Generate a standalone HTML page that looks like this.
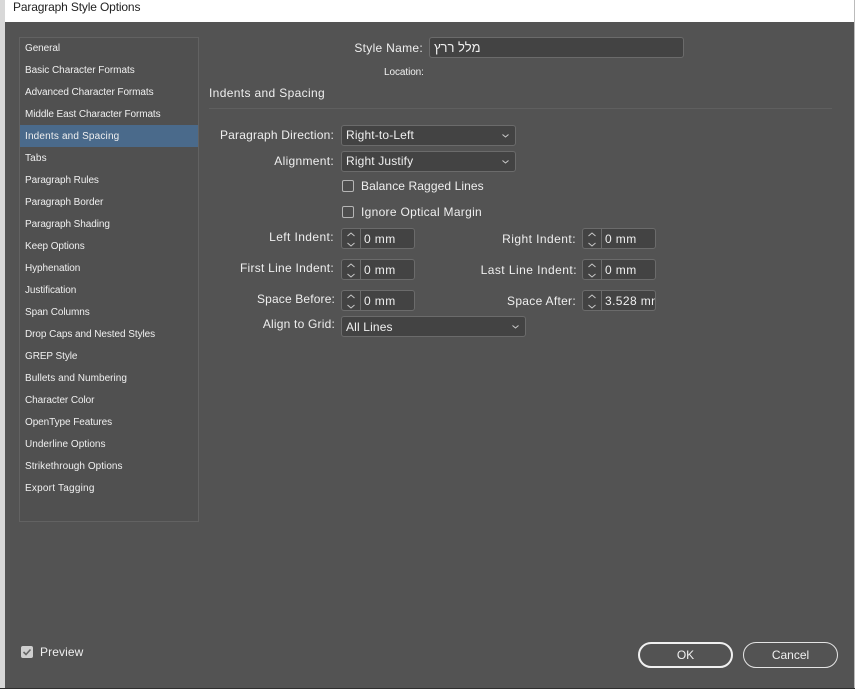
<!DOCTYPE html>
<html><head><meta charset="utf-8">
<style>
html,body{margin:0;padding:0;width:855px;height:689px;overflow:hidden;background:#2a2a2a}
body{position:relative;font-family:"Liberation Sans","Noto Sans CJK JP",sans-serif;color:#f0f0f0}
div,span{position:absolute;box-sizing:border-box;white-space:nowrap}
#left{left:0;top:0;width:5px;height:689px;background:#d8d8d8}
#title{left:5px;top:0;width:850px;height:22px;background:#fff}
#title span{left:8px;top:0;font-size:12px;line-height:14px;color:#222;letter-spacing:-.15px}
#dlg{left:5px;top:22px;width:849px;height:666px;background:#535353}
#right{left:854px;top:0;width:1px;height:689px;background:#bbb}
#list{left:19px;top:37px;width:180px;height:485px;border:1px solid #626262;background:#505050}
.it{left:25px;font-size:10px;line-height:14px;letter-spacing:-.08px;color:#f0f0f0;margin-top:3px}
#sel{left:20px;top:125px;width:178px;height:22px;background:#4a6a8b}
.l{font-size:12px;line-height:16px;letter-spacing:.3px;text-align:right;color:#efefef}
.f{background:#434343;border:1px solid #6b6b6b;border-radius:3px;height:21px}
.f span{left:4px;top:1px;font-size:12px;line-height:17px;letter-spacing:.15px;color:#f0f0f0}
.f svg{position:absolute;right:5px;top:7px}
.cb{width:12px;height:12px;border:1px solid #b5b5b5;border-radius:2px;background:#4d4d4d}
.sp{background:#434343;border:1px solid #6b6b6b;border-radius:3px;height:21px;width:74px;overflow:hidden}
.sp i{position:absolute;left:18px;top:0;width:1px;height:19px;background:#6b6b6b}
.sp svg{position:absolute;left:3px;top:2px}
.sp span{left:22px;top:2px;font-size:12px;line-height:17px;letter-spacing:.4px;color:#f0f0f0}
.btn{border-radius:13px;height:26px;text-align:center;font-size:12px;line-height:23px;letter-spacing:0;color:#f0f0f0}
</style></head><body>
<div id="left"></div>
<div id="title"><span>Paragraph Style Options</span></div>
<div id="dlg"></div>
<div id="right"></div>
<div id="list"></div>
<div id="sel"></div>
<span class="it" style="top:39px">General</span>
<span class="it" style="top:61px;letter-spacing:-.04px">Basic Character Formats</span>
<span class="it" style="top:83px">Advanced Character Formats</span>
<span class="it" style="top:105px;letter-spacing:-.1px">Middle East Character Formats</span>
<span class="it" style="top:127px;letter-spacing:.17px">Indents and Spacing</span>
<span class="it" style="top:149px;letter-spacing:.15px">Tabs</span>
<span class="it" style="top:171px">Paragraph Rules</span>
<span class="it" style="top:193px">Paragraph Border</span>
<span class="it" style="top:215px">Paragraph Shading</span>
<span class="it" style="top:237px">Keep Options</span>
<span class="it" style="top:259px">Hyphenation</span>
<span class="it" style="top:281px">Justification</span>
<span class="it" style="top:303px">Span Columns</span>
<span class="it" style="top:325px;letter-spacing:-.06px">Drop Caps and Nested Styles</span>
<span class="it" style="top:347px">GREP Style</span>
<span class="it" style="top:369px;letter-spacing:.04px">Bullets and Numbering</span>
<span class="it" style="top:391px">Character Color</span>
<span class="it" style="top:413px">OpenType Features</span>
<span class="it" style="top:435px;letter-spacing:.03px">Underline Options</span>
<span class="it" style="top:457px;letter-spacing:.04px">Strikethrough Options</span>
<span class="it" style="top:479px;letter-spacing:.22px">Export Tagging</span>

<span class="l" style="right:432px;top:40px;letter-spacing:.3px">Style Name:</span>
<div class="f" style="left:429px;top:37px;width:255px;height:21px"><span dir="rtl" style="left:4px;font-size:13px;letter-spacing:0">מלל ררץ</span></div>
<span class="it" style="left:384px;top:63px">Location:</span>
<span class="l" style="left:209px;top:85px;text-align:left;letter-spacing:.35px">Indents and Spacing</span>
<div style="left:209px;top:108px;width:623px;height:1px;background:#5f5f5f"></div>

<span class="l" style="right:521px;top:127px;letter-spacing:.2px">Paragraph Direction:</span>
<div class="f" style="left:341px;top:125px;width:175px"><span>Right-to-Left</span><svg width="9" height="6"><path d="M1.5 1.5l3 2.5 3-2.5" fill="none" stroke="#ccc"/></svg></div>
<span class="l" style="right:521px;top:153px">Alignment:</span>
<div class="f" style="left:341px;top:151px;width:175px"><span>Right Justify</span><svg width="9" height="6"><path d="M1.5 1.5l3 2.5 3-2.5" fill="none" stroke="#ccc"/></svg></div>

<div class="cb" style="left:342px;top:180px"></div>
<span class="l" style="left:361px;top:178px;text-align:left;letter-spacing:.1px">Balance Ragged Lines</span>
<div class="cb" style="left:342px;top:206px"></div>
<span class="l" style="left:361px;top:204px;text-align:left;letter-spacing:.3px">Ignore Optical Margin</span>

<span class="l" style="right:521px;top:229px;letter-spacing:.4px">Left Indent:</span>
<div class="sp" style="left:341px;top:228px"><svg width="12" height="17"><path d="M2.5 5l3.5-3 3.5 3M2.5 12l3.5 3 3.5-3" fill="none" stroke="#c8c8c8"/></svg><i></i><span>0 mm</span></div>
<span class="l" style="right:279px;top:231px;letter-spacing:.45px">Right Indent:</span>
<div class="sp" style="left:582px;top:228px"><svg width="12" height="17"><path d="M2.5 5l3.5-3 3.5 3M2.5 12l3.5 3 3.5-3" fill="none" stroke="#c8c8c8"/></svg><i></i><span>0 mm</span></div>

<span class="l" style="right:521px;top:260px;letter-spacing:.26px">First Line Indent:</span>
<div class="sp" style="left:341px;top:259px"><svg width="12" height="17"><path d="M2.5 5l3.5-3 3.5 3M2.5 12l3.5 3 3.5-3" fill="none" stroke="#c8c8c8"/></svg><i></i><span>0 mm</span></div>
<span class="l" style="right:278px;top:262px;letter-spacing:.45px">Last Line Indent:</span>
<div class="sp" style="left:582px;top:259px"><svg width="12" height="17"><path d="M2.5 5l3.5-3 3.5 3M2.5 12l3.5 3 3.5-3" fill="none" stroke="#c8c8c8"/></svg><i></i><span>0 mm</span></div>

<span class="l" style="right:520px;top:291px;letter-spacing:.15px">Space Before:</span>
<div class="sp" style="left:341px;top:290px"><svg width="12" height="17"><path d="M2.5 5l3.5-3 3.5 3M2.5 12l3.5 3 3.5-3" fill="none" stroke="#c8c8c8"/></svg><i></i><span>0 mm</span></div>
<span class="l" style="right:279px;top:293px;letter-spacing:.3px">Space After:</span>
<div class="sp" style="left:582px;top:290px"><svg width="12" height="17"><path d="M2.5 5l3.5-3 3.5 3M2.5 12l3.5 3 3.5-3" fill="none" stroke="#c8c8c8"/></svg><i></i><span>3.528 mm</span></div>

<span class="l" style="right:520px;top:316px;letter-spacing:.2px">Align to Grid:</span>
<div class="f" style="left:341px;top:316px;width:185px"><span style="top:2px">All Lines</span><svg width="9" height="6"><path d="M1.5 1.5l3 2.5 3-2.5" fill="none" stroke="#ccc"/></svg></div>

<div style="left:21px;top:646px;width:12px;height:12px;background:#cfcfcf;border-radius:2px"><svg width="12" height="12" style="position:absolute;left:0;top:0"><path d="M2.5 6l2.5 2.5 4.5-5" fill="none" stroke="#666" stroke-width="1.6"/></svg></div>
<span class="l" style="left:40px;top:644px;text-align:left;letter-spacing:.1px">Preview</span>

<div class="btn" style="left:638px;top:642px;width:95px;border:2px solid #f0f0f0">OK</div>
<div class="btn" style="left:743px;top:642px;width:95px;border:1px solid #e4e4e4;line-height:24px">Cancel</div>
<div style="left:0;top:688px;width:855px;height:1px;background:#2e2e2e"></div>
</body></html>
